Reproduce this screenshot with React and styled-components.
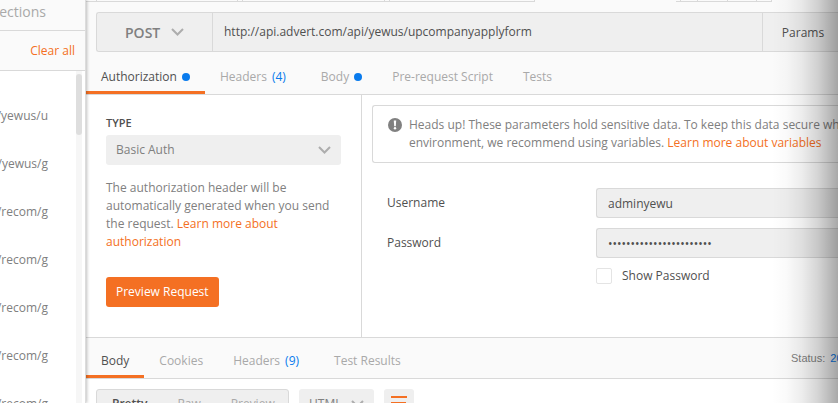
import React from "react";
import styled, { createGlobalStyle, css } from "styled-components";

const c = {
  orange: "#f47023",
  blue: "#097bed",
  line: "#d9d9d9",
  field: "#efefef",
  bar: "#fafafa",
  dark: "#505050",
  mid: "#808080",
  light: "#a9a9a9",
};

const GlobalStyle = createGlobalStyle`
  *, *::before, *::after { box-sizing: border-box; }
  body { margin: 0; background: #fff; }
  body, button, input, select {
    font-family: "Open Sans", sans-serif;
    font-size: 12px;
    line-height: 18px;
    color: ${c.dark};
  }
  button, input, select { margin: 0; padding: 0; border: 0; background: none; outline: none; }
`;

const Shell = styled.div`
  position: relative;
  display: flex;
  height: 100vh;
  overflow: hidden;
`;

const Sidebar = styled.aside`
  flex: 0 0 86px;
  z-index: 1;
  display: flex;
  flex-direction: column;
  overflow: hidden;
  border-right: 1px solid #dcdcdc;
  box-shadow: 1px 0 3px rgba(0, 0, 0, 0.25);
  background: #fff;
`;

const SideTab = styled.button`
  display: flex;
  align-items: center;
  justify-content: flex-end;
  flex: 0 0 31px;
  padding: 0 39px 7px 0;
  border-bottom: 1px solid ${c.line};
  background: ${c.bar};
  color: ${c.light};
  font-size: 14px;
`;

const ClearRow = styled.div`
  display: flex;
  align-items: center;
  justify-content: flex-end;
  flex: 0 0 40px;
  padding-right: 10px;
  border-bottom: 1px solid ${c.line};
  background: ${c.bar};
`;

const ClearButton = styled.button`
  color: ${c.orange};
`;

const HistoryPane = styled.div`
  display: flex;
  flex: 1;
  min-height: 0;
`;

const HistoryList = styled.ul`
  flex: 1;
  min-width: 0;
  margin: 0;
  padding: 21px 28px 0 0;
  list-style: none;
`;

const HistoryItem = styled.li`
  display: flex;
  align-items: center;
  justify-content: flex-end;
  height: 48px;
  color: ${c.mid};
  white-space: nowrap;
`;

const ScrollTrack = styled.div`
  flex: 0 0 6px;
  margin-right: 3px;
  padding-top: 3px;
  background: #f6f6f6;
`;

const ScrollThumb = styled.div`
  height: 61px;
  border-radius: 3px;
  background: #dedede;
`;

const Main = styled.main`
  flex: 1;
  min-width: 0;
  display: flex;
  flex-direction: column;

  & > * { flex-shrink: 0; }
`;

const RequestTabs = styled.div`
  display: flex;
  height: 2px;
  background: ${c.bar};
`;

const RequestTab = styled.div`
  flex: 0 0 ${(p) => p.$w}px;
  border-bottom: 1px solid ${c.line};
  border-right: 1px solid ${c.line};
`;

const TabSpace = styled.div`
  flex: 0 0 141px;
`;

const UrlSection = styled.div`
  padding: 10px 0 0 10px;
  background: ${c.bar};
`;

const UrlBar = styled.div`
  display: flex;
  height: 40px;
  border: 1px solid ${c.line};
  border-right: 0;
  border-radius: 3px 0 0 3px;
  background: ${c.field};
`;

const SelectWrap = styled.div`
  display: grid;
  grid-template-columns: 1fr auto;
  align-items: center;
  height: 30px;
  width: ${(p) => (p.$w ? `${p.$w}px` : "auto")};
  border-radius: 3px;
  background: ${c.field};

  & > select {
    grid-area: 1 / 1 / 2 / 3;
    width: 100%;
    height: 100%;
    appearance: none;
    color: ${c.mid};
    padding-left: 10px;
  }
  & > svg {
    grid-area: 1 / 2;
    margin-right: 10px;
    pointer-events: none;
  }
  ${(p) =>
    p.$method &&
    css`
      height: 38px;
      border-right: 1px solid ${c.line};
      border-radius: 3px 0 0 3px;
      & > select { padding: 2px 0 0 28px; font-size: 14px; font-weight: 600; }
      & > svg { margin-right: 28px; }
    `}
`;

const UrlInput = styled.input`
  flex: 1;
  min-width: 0;
  padding: 0 11px;
`;

const ParamsButton = styled.button`
  flex: 0 0 76px;
  padding: 2px 0 0 5px;
  border-left: 1px solid ${c.line};
`;

const TabBar = styled.nav`
  display: flex;
  height: ${(p) => p.$h}px;
  border-bottom: 1px solid ${c.line};
  border-top: ${(p) => (p.$top ? `1px solid ${c.line}` : 0)};
  background: ${c.bar};
`;

const Tab = styled.button`
  display: flex;
  align-items: center;
  padding: ${(p) => (p.$low ? 10 : 8)}px 15px 0;
  border-bottom: 3px solid ${(p) => (p.$active ? c.orange : "transparent")};
  color: ${(p) => (p.$active ? c.dark : c.light)};
  white-space: nowrap;
`;

const Dot = styled.i`
  width: 8px;
  height: 8px;
  margin-left: 5px;
  border-radius: 50%;
  background: ${c.blue};
`;

const Count = styled.span`
  margin: 0 5px;
  color: ${c.blue};
`;

const Status = styled.div`
  margin-left: auto;
  padding-top: 11px;
  width: 47px;
  color: ${c.mid};
  font-family: "Liberation Sans", sans-serif;
  font-size: 11px;
  white-space: nowrap;

  b { margin-left: 2px; color: ${c.blue}; font-weight: 400; }
`;

const AuthPanel = styled.section`
  display: flex;
  height: 242px;
`;

const AuthType = styled.div`
  flex: 0 0 276px;
  padding: 19px 20px 0;
  border-right: 1px solid ${c.line};
`;

const TypeLabel = styled.label`
  display: block;
  margin-bottom: 3px;
  font-size: 11px;
  font-weight: 600;
`;

const Help = styled.p`
  margin: 14px 0 26px;
  color: ${c.mid};
`;

const Link = styled.a`
  color: ${c.orange};
  text-decoration: none;
`;

const PreviewButton = styled.button`
  height: 30px;
  padding: 0 10px;
  border-radius: 3px;
  background: ${c.orange};
  color: #fff;
`;

const AuthDetails = styled.div`
  flex: 1;
  min-width: 0;
  padding: 10px 0 0 10px;
`;

const Notice = styled.div`
  display: flex;
  gap: 7px;
  height: 58px;
  padding: 10px 0 0 15px;
  border: 1px solid ${c.line};
  border-right: 0;
  border-radius: 3px 0 0 3px;
  color: ${c.mid};
  white-space: nowrap;

  svg { flex: none; margin-top: 2px; }
  p { margin: 0; }
`;

const Form = styled.form`
  display: grid;
  grid-template-columns: 209px 1fr;
  grid-auto-rows: 30px;
  row-gap: 10px;
  align-items: center;
  margin-top: 25px;
  padding-left: 15px;
`;

const Field = styled.input`
  height: 30px;
  min-width: 0;
  padding: 0 11px;
  border: 1px solid ${c.line};
  border-right: 0;
  border-radius: 3px 0 0 3px;
  background: ${c.field};
`;

const CheckLabel = styled.label`
  grid-column: 2;
  display: flex;
  align-items: center;
  gap: 10px;
  margin-top: -14px;
`;

const CheckBox = styled.input`
  appearance: none;
  width: 16px;
  height: 16px;
  border: 1px solid #e4e4e4;
  border-radius: 2px;
  background: #fff;
`;

const ViewBar = styled.div`
  display: flex;
  gap: 10px;
  padding: 10px;
`;

const Modes = styled.div`
  display: flex;
  height: 30px;
  width: 193px;
  border: 1px solid ${c.line};
  border-radius: 3px;
  background: ${c.field};
`;

const Mode = styled.button`
  padding: 0 15px;
  color: ${(p) => (p.$active ? c.dark : c.light)};
  font-weight: ${(p) => (p.$active ? 600 : 400)};
`;

const WrapButton = styled.button`
  display: flex;
  justify-content: center;
  width: 30px;
  height: 30px;
  padding-top: 7px;
  border-radius: 3px;
  background: ${c.field};
`;

const EdgeShade = styled.div`
  position: absolute;
  inset: 0 0 0 auto;
  width: 66px;
  pointer-events: none;
  background: linear-gradient(
    to right,
    rgba(0, 0, 0, 0),
    rgba(0, 0, 0, 0.02) 22%,
    rgba(0, 0, 0, 0.07) 45%,
    rgba(0, 0, 0, 0.17) 70%,
    rgba(0, 0, 0, 0.34)
  );
`;

const Chevron = () => (
  <svg width="13" height="8" viewBox="0 0 13 8" fill="none" stroke="#adadad" strokeWidth="2">
    <path d="M1 1l5.5 5.5L12 1" />
  </svg>
);

const Alert = () => (
  <svg width="14" height="14" viewBox="0 0 14 14">
    <circle cx="7" cy="7" r="7" fill="#808080" />
    <path d="M5.8 2.5h2.4L7.8 8.2H6.2z" fill="#fff" />
    <circle cx="7" cy="10.3" r="1.2" fill="#fff" />
  </svg>
);

const WrapIcon = () => (
  <svg width="16" height="14" viewBox="0 0 16 14" fill="none" stroke={c.orange} strokeWidth="2">
    <path d="M0 1h16M0 7h15M0 13h7" />
  </svg>
);

const history = ["/yewus/u", "/yewus/g", "/recom/g", "/recom/g", "/recom/g", "/recom/g", "/recom/g"];

export default function App() {
  return (
    <Shell>
      <GlobalStyle />
      <Sidebar>
        <SideTab>ections</SideTab>
        <ClearRow>
          <ClearButton>Clear all</ClearButton>
        </ClearRow>
        <HistoryPane>
          <HistoryList>
            {history.map((path, i) => (
              <HistoryItem key={i}>{path}</HistoryItem>
            ))}
          </HistoryList>
          <ScrollTrack>
            <ScrollThumb />
          </ScrollTrack>
        </HistoryPane>
      </Sidebar>

      <Main>
        <RequestTabs>
          <RequestTab $w={11} />
          <RequestTab $w={141} />
          <RequestTab $w={5} />
          <RequestTab $w={142} />
          <RequestTab $w={5} />
          <RequestTab $w={145} />
          <TabSpace />
          <RequestTab $w={5} />
          <RequestTab $w={17} />
          <RequestTab $w={30} />
          <RequestTab $w={29} />
          <RequestTab $w={15} />
        </RequestTabs>
        <UrlSection>
          <UrlBar>
            <SelectWrap $w={116} $method>
              <select aria-label="Method" defaultValue="POST">
                <option>POST</option>
              </select>
              <Chevron />
            </SelectWrap>
            <UrlInput
              aria-label="Request URL"
              defaultValue="http://api.advert.com/api/yewus/upcompanyapplyform"
            />
            <ParamsButton>Params</ParamsButton>
          </UrlBar>
        </UrlSection>
        <TabBar $h={43}>
          <Tab $low $active>
            Authorization
            <Dot />
          </Tab>
          <Tab $low>
            Headers <Count>(4)</Count>
          </Tab>
          <Tab $low>
            Body
            <Dot />
          </Tab>
          <Tab $low>Pre-request Script</Tab>
          <Tab $low>Tests</Tab>
        </TabBar>

        <AuthPanel>
          <AuthType>
            <TypeLabel htmlFor="auth-type">TYPE</TypeLabel>
            <SelectWrap>
              <select id="auth-type" defaultValue="Basic Auth">
                <option>Basic Auth</option>
              </select>
              <Chevron />
            </SelectWrap>
            <Help>
              The authorization header will be automatically generated when you send the request.{" "}
              <Link href="#authorization">Learn more about authorization</Link>
            </Help>
            <PreviewButton>Preview Request</PreviewButton>
          </AuthType>
          <AuthDetails>
            <Notice>
              <Alert />
              <p>
                Heads up! These parameters hold sensitive data. To keep this data secure wh
                <br />
                environment, we recommend using variables.{" "}
                <Link href="#variables">Learn more about variables</Link>
              </p>
            </Notice>
            <Form>
              <label htmlFor="username">Username</label>
              <Field id="username" defaultValue="adminyewu" autoComplete="off" />
              <label htmlFor="password">Password</label>
              <Field
                id="password"
                type="password"
                defaultValue="abcdefghijklmnopqrstuvw"
                autoComplete="off"
              />
              <CheckLabel>
                <CheckBox type="checkbox" />
                Show Password
              </CheckLabel>
            </Form>
          </AuthDetails>
        </AuthPanel>

        <TabBar $h={42} $top>
          <Tab $active>Body</Tab>
          <Tab>Cookies</Tab>
          <Tab>
            Headers <Count>(9)</Count>
          </Tab>
          <Tab>Test Results</Tab>
          <Status>
            Status: <b>20</b>
          </Status>
        </TabBar>
        <ViewBar>
          <Modes>
            <Mode $active>Pretty</Mode>
            <Mode>Raw</Mode>
            <Mode>Preview</Mode>
          </Modes>
          <SelectWrap $w={75}>
            <select aria-label="Format" defaultValue="HTML">
              <option>HTML</option>
            </select>
            <Chevron />
          </SelectWrap>
          <WrapButton aria-label="Wrap lines">
            <WrapIcon />
          </WrapButton>
        </ViewBar>
      </Main>
      <EdgeShade />
    </Shell>
  );
}
